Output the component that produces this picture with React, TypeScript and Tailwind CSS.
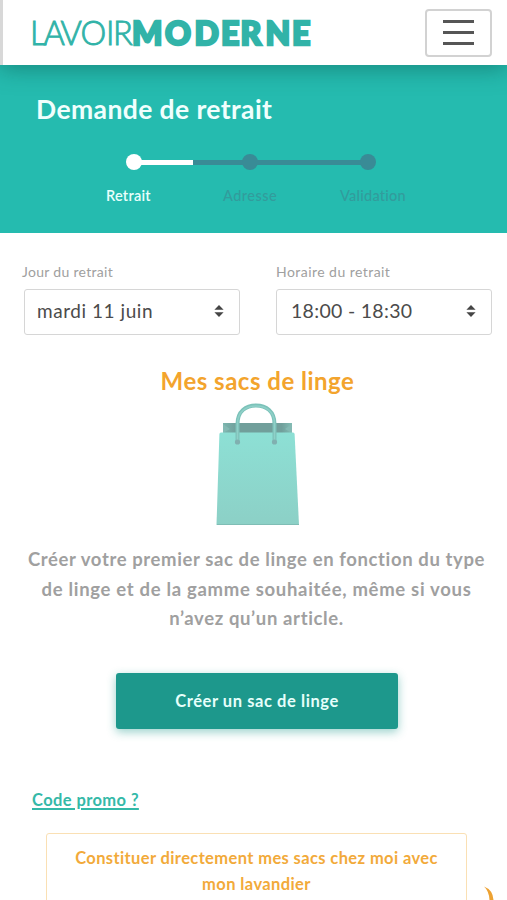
import { clsx } from "clsx";

const steps = [
  { label: "Retrait", active: true, labelClass: "left-[106px] tracking-[0.25px]" },
  { label: "Adresse", active: false, labelClass: "left-[223px] tracking-[0.45px]" },
  { label: "Validation", active: false, labelClass: "left-[340px] tracking-[0.25px]" },
];

function Logo() {
  return (
    <svg width="284" height="48" viewBox="0 0 284 48" className="ml-[28px] fill-[#31b3a8] stroke-[#31b3a8]" role="img" aria-label="Lavoir Moderne">
      <text x="-1 12.500 29.500 49.500 75 82" y="35.500" fontFamily="Lato, sans-serif" fontSize="32.500" fontWeight="300" strokeWidth="0.9">
        LAVOIR
      </text>
      <text x="101 134 163.500 190 209.500 234.500 261" y="35.500" fontFamily="Lato, sans-serif" fontSize="32" fontWeight="900" strokeWidth="2.4">
        MODERNE
      </text>
    </svg>
  );
}

function Header() {
  return (
    <header className="relative z-10 flex h-[65px] items-center justify-between border-l-[3px] border-[#d8d8d8] bg-white pr-[15px] shadow-[0_4px_22px_rgba(10,90,80,0.5)]">
      <Logo />
      <button aria-label="Menu" className="flex h-12 w-[67px] flex-col items-center justify-center gap-2 rounded-[4px] border-2 border-[#d2d2d2]">
        <span className="h-[3px] w-[31px] bg-[#565656]" />
        <span className="h-[3px] w-[31px] bg-[#565656]" />
        <span className="h-[3px] w-[31px] bg-[#565656]" />
      </button>
    </header>
  );
}

function Stepper() {
  return (
    <div>
      <div className="mt-[27px] ml-[126px] flex items-center">
        <span className="size-4 rounded-full bg-white" />
        <span className="-ml-px h-[5px] w-[52px] bg-white" />
        <span className="h-[5px] w-[50px] bg-[#398b96]" />
        <span className="-ml-px size-4 rounded-full bg-[#398b96]" />
        <span className="-mx-px h-[5px] w-[104px] bg-[#398b96]" />
        <span className="size-4 rounded-full bg-[#398b96]" />
      </div>
      <div className="relative mt-4 h-5">
        {steps.map((s) => (
          <span
            key={s.label}
            className={clsx("absolute top-0 text-[14.5px] leading-5", s.labelClass, s.active ? "font-semibold text-[#e9fffc]" : "font-medium text-[#329c9c]")}
          >
            {s.label}
          </span>
        ))}
      </div>
    </div>
  );
}

function SelectField({ label, value, labelClass, valueClass }: { label: string; value: string; labelClass: string; valueClass: string }) {
  return (
    <div className="w-[216px]">
      <div className={clsx("h-5 text-[14px] leading-5 whitespace-nowrap text-[#a0a0a0]", labelClass)}>{label}</div>
      <div className="mt-[7px] flex h-[46px] items-center justify-between rounded-[3px] border border-[#d6d6d6] pr-[15px] pl-3">
        <span className={clsx("pb-0.5 leading-6 text-[#4b4b4b]", valueClass)}>{value}</span>
        <svg width="10" height="12" viewBox="0 0 10 12" className="mb-0.5 fill-[#454545]">
          <path d="M5 0 9.6 4.800H.4zM5 12 .4 7.200h9.200z" />
        </svg>
      </div>
    </div>
  );
}

function Bag() {
  return (
    <svg width="86" height="124" viewBox="0 0 86 124" className="mx-auto">
      <defs>
        <linearGradient id="front" x1="0" y1="0" x2="0" y2="1">
          <stop offset="0" stopColor="#8de0d5" />
          <stop offset="1" stopColor="#8cd0c6" />
        </linearGradient>
        <linearGradient id="inside" x1="0" y1="0" x2="1" y2="0">
          <stop offset="0" stopColor="#7bb5ae" />
          <stop offset="0.2" stopColor="#719f9b" />
          <stop offset="0.85" stopColor="#719f9b" />
          <stop offset="1" stopColor="#82bdb5" />
        </linearGradient>
      </defs>
      <path d="M8 20h69v12H8z" fill="url(#inside)" />
      <path d="M8 21l7 5-7 4zM77 21l-7 5 7 4z" fill="#84b9b3" />
      <path d="M6 29.500h72q1.500 0 1.600 1.500L84 122H1.500L4.400 31Q4.500 29.500 6 29.500z" fill="url(#front)" />
      <path d="M2 121.500h82" stroke="#7fbdb5" strokeWidth="1" />
      <path d="M22.500 39V21C22.500 8 31 2.500 41 2.500s18.500 5.500 18.500 18.500v18" fill="none" stroke="#7cc2b9" strokeWidth="4" />
      <path d="M22.500 38V21C22.500 8.500 31 3 41 3s18.500 5.500 18.500 18v17" fill="none" stroke="#8fd0c8" strokeWidth="1.500" />
      <circle cx="22.500" cy="39" r="2.600" fill="#80b0b0" />
      <circle cx="59.500" cy="39" r="2.600" fill="#80b0b0" />
    </svg>
  );
}

export default function App() {
  return (
    <div className="relative h-[900px] w-[507px] overflow-hidden bg-white font-['Lato',sans-serif]">
      <Header />

      <section className="h-[168px] bg-[#25bbaf] pt-[26px]">
        <h1 className="pl-9 text-[26.5px] leading-9 font-bold tracking-[0.4px] text-[#f0fffd]">Demande de retrait</h1>
        <Stepper />
      </section>

      <main>
        <div className="flex gap-9 pt-[29px] pl-6">
          <SelectField label="Jour du retrait" value="mardi 11 juin" labelClass="-ml-0.5 tracking-[0.3px]" valueClass="text-[19px] tracking-[0.55px]" />
          <SelectField label="Horaire du retrait" value="18:00 - 18:30" labelClass="tracking-[0.45px]" valueClass="pl-0.5 text-[19.5px] tracking-[0.3px]" />
        </div>

        <h2 className="mt-[31px] pl-2 text-center text-[24px] leading-[30px] font-bold tracking-[0.5px] text-[#f3a42d]">Mes sacs de linge</h2>
        <div className="mt-[7px] pl-2">
          <Bag />
        </div>

        <p className="mt-[18px] pl-1.5 text-center text-[18.5px] leading-[29.7px] font-bold text-[#a0a0a0]">
          <span className="block tracking-[0.61px]">Créer votre premier sac de linge en fonction du type</span>
          <span className="block tracking-[0.69px]">de linge et de la gamme souhaitée, même si vous</span>
          <span className="block tracking-[0.63px]">n’avez qu’un article.</span>
        </p>

        <button className="mt-[39px] ml-[116px] flex h-14 w-[282px] items-center justify-center rounded-[3px] bg-[#1d988c] text-[16.5px] font-bold tracking-[0.57px] text-[#e6fffb] shadow-[0_3px_10px_rgba(29,152,140,0.45)]">
          Créer un sac de linge
        </button>

        <a className="mt-[59px] ml-8 block w-fit text-[16.5px] leading-6 font-bold tracking-[0.4px] text-[#34b9a8] underline decoration-[1.5px] underline-offset-2">
          Code promo ?
        </a>

        <div className="mt-[21px] ml-[46px] h-24 w-[421px] rounded-[3px] border border-[#fae0b4] pt-[11px] text-center text-[16.5px] leading-[26px] font-bold text-[#f2aa3a]">
          <span className="block tracking-[0.38px]">Constituer directement mes sacs chez moi avec</span>
          <span className="block tracking-[0.4px]">mon lavandier</span>
        </div>
      </main>

      {/* edge of the chat bubble */}
      <svg width="14" height="16" viewBox="0 0 14 16" className="absolute bottom-0 left-[482px] fill-[#eda233]">
        <path d="M2 2.500Q11 6 11.500 16H7.500Q7 7 2 2.500z" />
      </svg>
    </div>
  );
}
